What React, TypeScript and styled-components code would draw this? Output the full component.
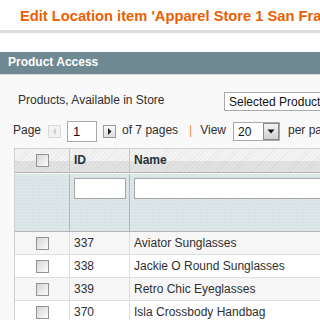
import React from 'react';
import styled, { createGlobalStyle } from 'styled-components';

const Global = createGlobalStyle`
  html, body { margin: 0; padding: 0; background: #fff; overflow: hidden; }
  body { font-family: "Liberation Sans", Arial, sans-serif; font-size: 12px; color: #2f2f2f; }
  * { box-sizing: border-box; }
`;

const Page = styled.div`
  width: 320px;
  height: 320px;
  overflow: hidden;
  background: #fff;
`;

const TitleBar = styled.h3`
  margin: 0;
  height: 33px;
  padding: 3px 0 0 20px;
  line-height: 27px;
  border-bottom: 3px solid #dcdcdc;
  font-size: 14.7px;
  font-weight: bold;
  color: #eb5e00;
  white-space: nowrap;
`;

const Section = styled.section`
  margin-top: 19px;
  background: #f9f9f9;
  height: 300px;
`;

const SectionHead = styled.div`
  height: 23px;
  line-height: 20px;
  padding: 0 0 2px 8px;
  background: #6f8992;
  color: #fff;
  font-weight: bold;
  font-size: 12px;
  border-bottom: 1px solid #d4d4d4;
`;

const Body = styled.div`
  padding-top: 17px;
  white-space: nowrap;
`;

const StoreRow = styled.div`
  display: flex;
  align-items: flex-start;
  height: 19px;
  padding-left: 18px;
`;

const Label = styled.span`
  width: 206px;
  flex: none;
  line-height: 16px;
`;

const SelectBox = styled.div<{ $w: number }>`
  flex: none;
  width: ${p => p.$w}px;
  height: 19px;
  border: 1px solid #a9a9a9;
  background: #fff;
  display: flex;
  align-items: center;
  justify-content: space-between;
  padding-left: 4px;
  font-size: 12px;
  color: #111;
`;

const Pager = styled.div`
  display: flex;
  align-items: flex-start;
  height: 21px;
  margin-top: 10px;
  padding-left: 13px;
`;

const PagerText = styled.span<{ $ml?: number }>`
  flex: none;
  line-height: 18px;
  margin-left: ${p => p.$ml ?? 0}px;
`;

const Sep = styled(PagerText)`
  color: #f0903c;
`;

const NavButton = styled.span<{ $disabled?: boolean; $ml: number }>`
  flex: none;
  display: flex;
  align-items: center;
  justify-content: center;
  width: 13px;
  height: 13px;
  margin: 4px 0 0 ${p => p.$ml}px;
  border: 1px solid ${p => (p.$disabled ? '#dadada' : '#9a9a9a')};
  background: ${p => (p.$disabled ? '#f2f2f2' : 'linear-gradient(#fafafa, #dcdcdc)')};
`;

const PageInput = styled.span`
  flex: none;
  width: 30px;
  height: 21px;
  margin-left: 6px;
  border: 1px solid #a9a9a9;
  background: #fff;
  padding-left: 5px;
  line-height: 19px;
  font-size: 13px;
  color: #111;
`;

const PerPage = styled(SelectBox)`
  margin: 1px 0 0 7px;
  padding-left: 4px;
  height: 19px;
`;

const ArrowBox = styled.span`
  width: 16px;
  height: 17px;
  border: 1px solid #8a8a8a;
  background: linear-gradient(#f4f4f4, #cfcfcf);
  display: flex;
  align-items: center;
  justify-content: center;
`;

const Grid = styled.div`
  margin: 6px 0 0 14px;
  width: 420px;
  border-top: 1px solid #cbd3d4;
  border-left: 1px solid #cbd3d4;
`;

const HeadRow = styled.div`
  display: flex;
  height: 24px;
  border-bottom: 1px solid #b4b4b4;
  background:
    repeating-linear-gradient(135deg, rgba(0, 0, 0, 0.045) 0 1px, transparent 1px 3px),
    linear-gradient(#f4f4f4 0 52%, #e3e3e3 52% 100%);
`;

const FilterRow = styled.div`
  display: flex;
  height: 59px;
  border-top: 1px solid #fff;
  border-bottom: 1px solid #b4b4b4;
  background-color: #d8e4e6;
  background-image: radial-gradient(circle, rgba(255, 255, 255, 0.4) 0.7px, transparent 1px);
  background-size: 3px 3px;
`;

const DataRow = styled.div<{ $alt: boolean }>`
  display: flex;
  height: 23px;
  border-bottom: 1px solid #dadfe0;
  background: ${p => (p.$alt ? '#f6f6f6' : '#fff')};
`;

const Cell = styled.div<{ $col: 0 | 1 | 2; $line: string }>`
  flex: ${p => (p.$col === 2 ? '1' : 'none')};
  width: ${p => (p.$col === 0 ? '55px' : p.$col === 1 ? '60px' : 'auto')};
  border-right: 1px solid ${p => p.$line};
  display: flex;
  align-items: ${p => (p.$col === 0 ? 'center' : 'flex-start')};
  justify-content: ${p => (p.$col === 0 ? 'center' : 'flex-start')};
  padding-left: ${p => (p.$col === 0 ? 0 : 4)}px;
  line-height: 22px;
`;

const HeadCell = styled(Cell)`
  font-weight: bold;
  color: #263238;
  line-height: 23px;
`;

const FilterCell = styled(Cell)`
  padding-top: 4px;
`;

const FilterInput = styled.span<{ $w: number }>`
  display: block;
  width: ${p => p.$w}px;
  height: 21px;
  border: 1px solid #a6a6a6;
  background: #fff;
`;

const Check = styled.span`
  display: block;
  width: 13px;
  height: 13px;
  border: 1px solid #939393;
  background: linear-gradient(135deg, #d4d4d4, #fdfdfd);
`;

const rows = [
  { id: '337', name: 'Aviator Sunglasses' },
  { id: '338', name: 'Jackie O Round Sunglasses' },
  { id: '339', name: 'Retro Chic Eyeglasses' },
  { id: '370', name: 'Isla Crossbody Handbag' },
];

export default function App() {
  return (
    <Page>
      <Global />
      <TitleBar>Edit Location item 'Apparel Store 1 San Francisco'</TitleBar>
      <Section>
        <SectionHead>Product Access</SectionHead>
        <Body>
          <StoreRow>
            <Label>Products, Available in Store</Label>
            <SelectBox $w={150}>Selected Products</SelectBox>
          </StoreRow>
          <Pager>
            <PagerText>Page</PagerText>
            <NavButton $disabled $ml={7}>
              <svg width="5" height="7" viewBox="0 0 5 7"><polygon points="4,0 4,7 0.5,3.5" fill="#cfcfcf" /></svg>
            </NavButton>
            <PageInput>1</PageInput>
            <NavButton $ml={6}>
              <svg width="5" height="7" viewBox="0 0 5 7"><polygon points="1,0 1,7 4.5,3.5" fill="#222" /></svg>
            </NavButton>
            <PagerText $ml={6}>of 7 pages</PagerText>
            <Sep $ml={11}>|</Sep>
            <PagerText $ml={8}>View</PagerText>
            <PerPage $w={47}>
              20
              <ArrowBox>
                <svg width="8" height="5" viewBox="0 0 8 5"><polygon points="0.5,0.5 7.5,0.5 4,4.5" fill="#111" /></svg>
              </ArrowBox>
            </PerPage>
            <PagerText $ml={8}>per page</PagerText>
          </Pager>
          <Grid>
            <HeadRow>
              <HeadCell $col={0} $line="#c6c6c6"><Check /></HeadCell>
              <HeadCell $col={1} $line="#c6c6c6">ID</HeadCell>
              <HeadCell $col={2} $line="#c6c6c6">Name</HeadCell>
            </HeadRow>
            <FilterRow>
              <FilterCell $col={0} $line="#b4b4b4" />
              <FilterCell $col={1} $line="#b4b4b4"><FilterInput $w={52} /></FilterCell>
              <FilterCell $col={2} $line="#b4b4b4"><FilterInput $w={240} /></FilterCell>
            </FilterRow>
            {rows.map((r, i) => (
              <DataRow key={r.id} $alt={i % 2 === 0}>
                <Cell $col={0} $line="#dadfe0"><Check /></Cell>
                <Cell $col={1} $line="#dadfe0">{r.id}</Cell>
                <Cell $col={2} $line="#dadfe0">{r.name}</Cell>
              </DataRow>
            ))}
          </Grid>
        </Body>
      </Section>
    </Page>
  );
}
